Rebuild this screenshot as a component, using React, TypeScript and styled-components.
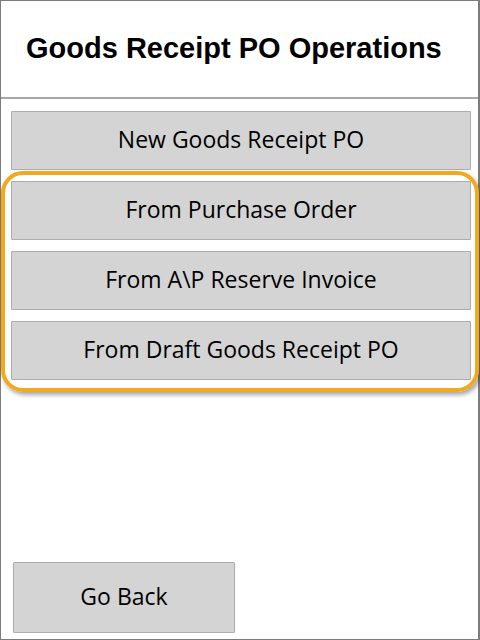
import React from "react";
import styled, { createGlobalStyle } from "styled-components";

const Global = createGlobalStyle`
  html, body { margin: 0; padding: 0; background: #ffffff; }
  * { box-sizing: border-box; }
`;

const Frame = styled.div`
  width: 480px;
  height: 640px;
  border: 1px solid #7c7c7c;
  border-right-width: 2px;
  display: flex;
  flex-direction: column;
  background: #fff;
`;

const Header = styled.div`
  height: 98px;
  border-bottom: 2px solid #a3a7ab;
  display: flex;
  align-items: center;
  padding-left: 25px;
  padding-bottom: 1px;
`;

const Title = styled.h1`
  margin: 0;
  font-family: "Liberation Sans", Arial, sans-serif;
  font-weight: bold;
  font-size: 29px;
  color: #000;
`;

const Content = styled.div`
  flex: 1;
  display: flex;
  flex-direction: column;
  padding: 12px 7px 6px 10px;
`;

const List = styled.div`
  display: flex;
  flex-direction: column;
  gap: 11px;
`;

const Group = styled.div`
  position: relative;
  display: flex;
  flex-direction: column;
  gap: 11px;
`;

const Highlight = styled.div`
  position: absolute;
  left: -10px;
  right: -8px;
  top: -10px;
  bottom: -12px;
  border: 4px solid #f2a91e;
  border-radius: 22px;
  box-shadow: 2px 3px 4px rgba(0, 0, 0, 0.35);
  pointer-events: none;
`;

const Button = styled.button<{ $w?: number; $h?: number }>`
  width: ${(p) => (p.$w ? `${p.$w}px` : "100%")};
  height: ${(p) => p.$h ?? 59}px;
  background: #d4d4d4;
  border: 1px solid #acacac;
  border-radius: 1px;
  font-family: "Open Sans", "Noto Sans", sans-serif;
  font-size: 23px;
  color: #000;
  padding: 0 0 3px 0;
  display: flex;
  align-items: center;
  justify-content: center;
`;

const Spacer = styled.div`
  flex: 1;
`;

const Footer = styled.div`
  padding-left: 2px;
`;

export default function App() {
  return (
    <>
      <Global />
      <Frame>
        <Header>
          <Title>Goods Receipt PO Operations</Title>
        </Header>
        <Content>
          <List>
            <Button>New Goods Receipt PO</Button>
            <Group>
              <Highlight />
              <Button>From Purchase Order</Button>
              <Button>From A\P Reserve Invoice</Button>
              <Button>From Draft Goods Receipt PO</Button>
            </Group>
          </List>
          <Spacer />
          <Footer>
            <Button $w={222} $h={71}>Go Back</Button>
          </Footer>
        </Content>
      </Frame>
    </>
  );
}
